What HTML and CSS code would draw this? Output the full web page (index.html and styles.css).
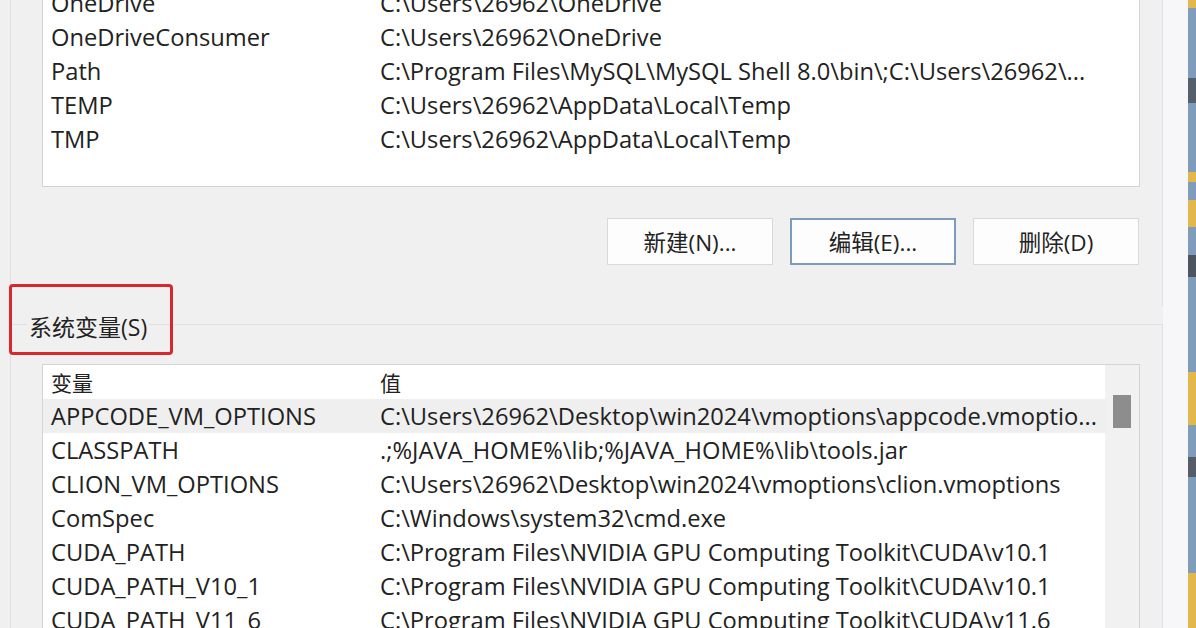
FILE: index.html
```html
<!DOCTYPE html>
<html lang="zh-CN">
<head>
  <meta charset="UTF-8">
  <title>环境变量</title>
  <link rel="stylesheet" href="styles.css">
</head>
<body>
  <div class="screen">
    <div class="dialog">

      <!-- 用户变量 -->
      <section class="group group-user">
        <div class="list list-user">
          <div class="row"><span class="name">OneDrive</span><span class="value">C:\Users\26962\OneDrive</span></div>
          <div class="row"><span class="name">OneDriveConsumer</span><span class="value">C:\Users\26962\OneDrive</span></div>
          <div class="row"><span class="name">Path</span><span class="value">C:\Program Files\MySQL\MySQL Shell 8.0\bin\;C:\Users\26962\...</span></div>
          <div class="row"><span class="name">TEMP</span><span class="value">C:\Users\26962\AppData\Local\Temp</span></div>
          <div class="row"><span class="name">TMP</span><span class="value">C:\Users\26962\AppData\Local\Temp</span></div>
        </div>
        <div class="buttons">
          <button class="btn">新建(N)...</button>
          <button class="btn btn-default">编辑(E)...</button>
          <button class="btn">删除(D)</button>
        </div>
      </section>

      <!-- 系统变量 -->
      <section class="group group-system">
        <div class="group-title">系统变量(S)</div>
        <div class="mark"></div>
        <div class="list list-system">
          <div class="rows">
            <div class="row head"><span class="name">变量</span><span class="value">值</span></div>
            <div class="row hover"><span class="name">APPCODE_VM_OPTIONS</span><span class="value">C:\Users\26962\Desktop\win2024\vmoptions\appcode.vmoptio...</span></div>
            <div class="row"><span class="name">CLASSPATH</span><span class="value">.;%JAVA_HOME%\lib;%JAVA_HOME%\lib\tools.jar</span></div>
            <div class="row"><span class="name">CLION_VM_OPTIONS</span><span class="value">C:\Users\26962\Desktop\win2024\vmoptions\clion.vmoptions</span></div>
            <div class="row"><span class="name">ComSpec</span><span class="value">C:\Windows\system32\cmd.exe</span></div>
            <div class="row"><span class="name">CUDA_PATH</span><span class="value">C:\Program Files\NVIDIA GPU Computing Toolkit\CUDA\v10.1</span></div>
            <div class="row"><span class="name">CUDA_PATH_V10_1</span><span class="value">C:\Program Files\NVIDIA GPU Computing Toolkit\CUDA\v10.1</span></div>
            <div class="row"><span class="name">CUDA_PATH_V11_6</span><span class="value">C:\Program Files\NVIDIA GPU Computing Toolkit\CUDA\v11.6</span></div>
          </div>
          <div class="scrollbar"><div class="thumb"></div></div>
        </div>
      </section>

    </div>
    <div class="edge"></div>
    <div class="desktop"></div>
  </div>
</body>
</html>
```

FILE: styles.css
```css
body {
  margin: 0;
  background: #f0f0f0;
  font-family: "Open Sans", "Noto Sans CJK SC", sans-serif;
  color: #222;
  overflow: hidden;
}
.screen {
  display: flex;
  height: 628px;
  overflow: hidden;
}
.dialog {
  width: 1163px;
  padding-left: 10px;
  box-sizing: border-box;
}
/* 右侧窗口边缘 */
.edge {
  width: 25px;
  background: #f7f7f9;
}
/* 露出的桌面背景 */
.desktop {
  width: 8px;
  background: linear-gradient(to bottom,
    #e2b84c 0, #e2b84c 8px,
    #7f9cba 8px, #7f9cba 78px,
    #54606c 78px, #54606c 103px,
    #7f9cba 103px, #7f9cba 172px,
    #e2b84c 172px, #e2b84c 182px,
    #7f9cba 182px, #7f9cba 200px,
    #e2b84c 200px, #e2b84c 227px,
    #7f9cba 227px, #7f9cba 255px,
    #4c5560 255px, #4c5560 277px,
    #7f9cba 277px, #7f9cba 372px,
    #e2b84c 372px, #e2b84c 425px,
    #7f9cba 425px, #7f9cba 457px,
    #555d66 457px, #555d66 477px,
    #7f9cba 477px, #7f9cba 573px,
    #e2b84c 573px);
}
/* 分组框 */
.group {
  position: relative;
  border: 1px solid #e0e0e0;
  padding-left: 31px;
  padding-right: 22px;
}
.group-user {
  margin-top: -20px;
  padding-top: 4px;
  padding-bottom: 41px;
  border-bottom: none;
}
.group-system {
  margin-top: 18px;
  padding-top: 39px;
  border-bottom: none;
}
.group-title {
  position: absolute;
  left: 16px;
  top: -13px;
  padding: 0 2px;
  background: #f0f0f0;
  font-size: 23px;
  line-height: 30px;
}
/* 红色标注框 */
.mark {
  position: absolute;
  left: -2px;
  top: -41px;
  width: 158px;
  height: 65px;
  border: 3px solid #d8272d;
  border-radius: 4px;
}
/* 列表 */
.list {
  background: #fff;
  border: 1px solid #d4d4d4;
}
.list-user {
  height: 200px;
}
.list-system {
  display: flex;
  border-bottom: none;
}
.rows {
  flex: 1;
  min-width: 0;
}
.row {
  display: flex;
  height: 34px;
  align-items: center;
  padding-left: 8px;
  font-size: 23.7px;
  white-space: nowrap;
  overflow: hidden;
}
.row .name {
  width: 329px;
  flex-shrink: 0;
}
.row.head {
  font-size: 21px;
}
.row.hover {
  background: #efefef;
}
.scrollbar {
  width: 34px;
  background: #f1f1f1;
  padding-top: 30px;
  padding-left: 8px;
  box-sizing: border-box;
}
.thumb {
  width: 18px;
  height: 33px;
  background: #8d8d8d;
}
/* 按钮 */
.buttons {
  display: flex;
  justify-content: flex-end;
  gap: 17px;
  margin-top: 31px;
  margin-right: 1px;
}
.btn {
  width: 166px;
  height: 47px;
  background: #fdfdfd;
  border: 1px solid #d9d9d9;
  font-family: "Open Sans", "Noto Sans CJK SC", sans-serif;
  font-size: 22.5px;
  color: #222;
  padding: 0;
}
.btn-default {
  border: 2px solid #7d9cbd;
}
```
